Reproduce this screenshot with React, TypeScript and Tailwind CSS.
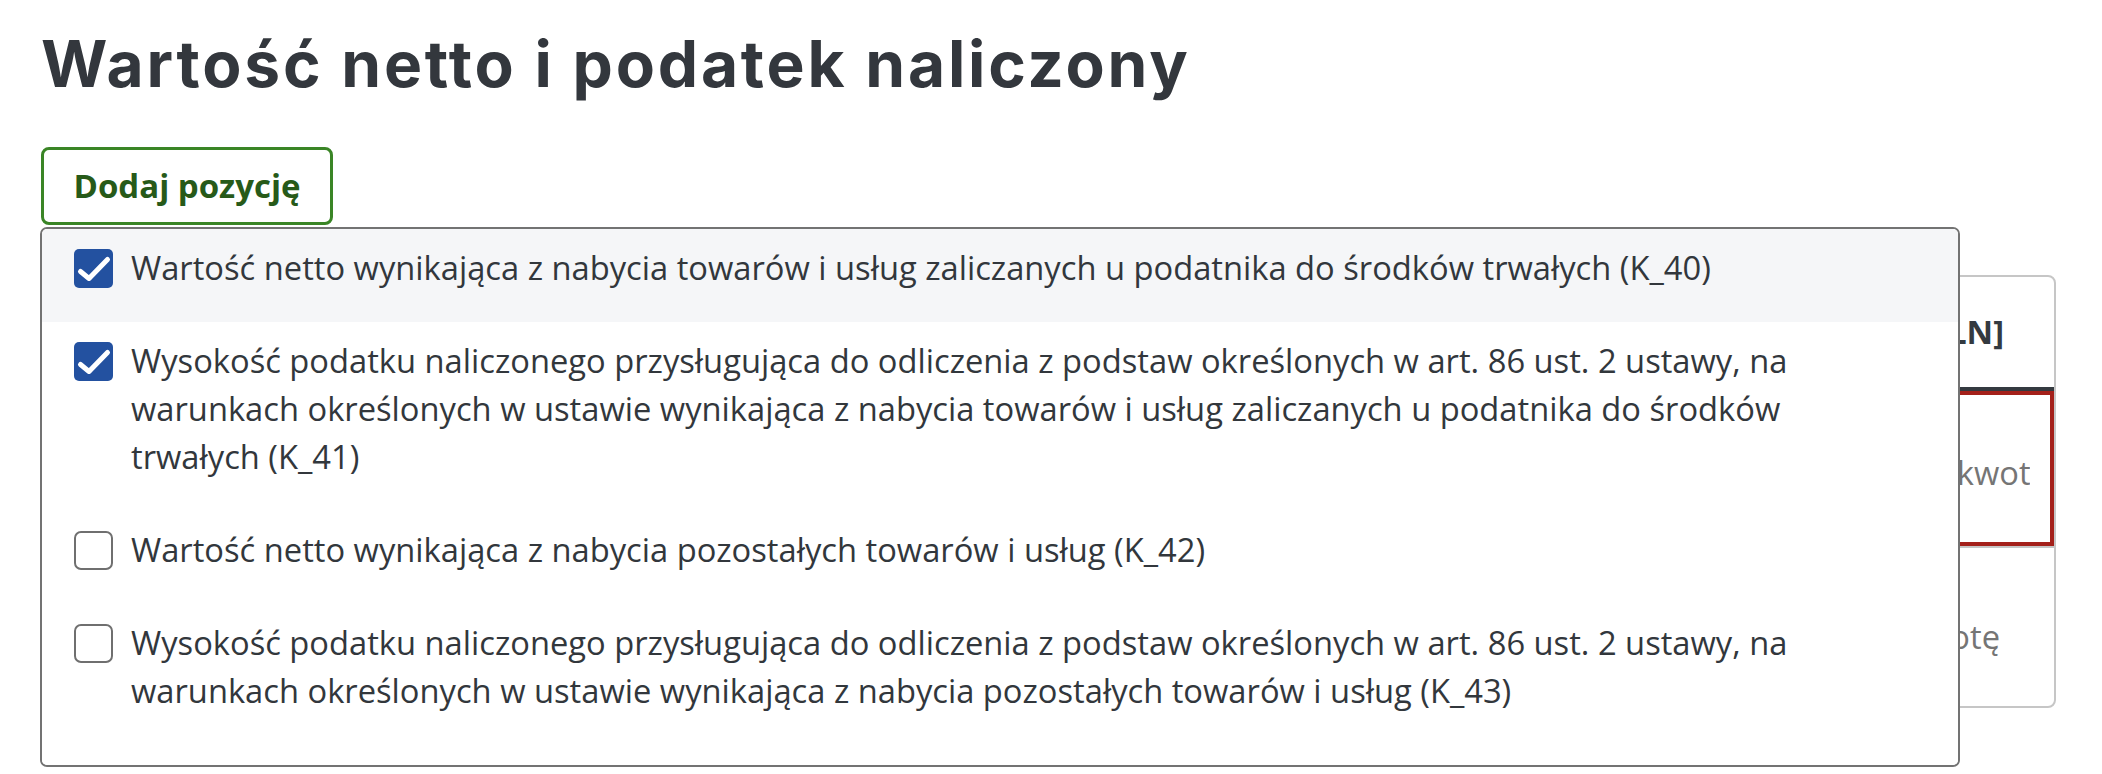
import React, { useState } from "react";

type Item = { id: string; label: string; checked: boolean };

const ITEMS: Item[] = [
  {
    id: "K_40",
    label:
      "Wartość netto wynikająca z nabycia towarów i usług zaliczanych u podatnika do środków trwałych (K_40)",
    checked: true,
  },
  {
    id: "K_41",
    label:
      "Wysokość podatku naliczonego przysługująca do odliczenia z podstaw określonych w art. 86 ust. 2 ustawy, na warunkach określonych w ustawie wynikająca z nabycia towarów i usług zaliczanych u podatnika do środków trwałych (K_41)",
    checked: true,
  },
  {
    id: "K_42",
    label: "Wartość netto wynikająca z nabycia pozostałych towarów i usług (K_42)",
    checked: false,
  },
  {
    id: "K_43",
    label:
      "Wysokość podatku naliczonego przysługująca do odliczenia z podstaw określonych w art. 86 ust. 2 ustawy, na warunkach określonych w ustawie wynikająca z nabycia pozostałych towarów i usług (K_43)",
    checked: false,
  },
  {
    id: "K_44",
    label: "Wartość netto wynikająca z korekty podatku naliczonego od nabycia środków trwałych (K_44)",
    checked: false,
  },
];

const Checkbox = ({ checked }: { checked: boolean }) =>
  checked ? (
    <span className="flex h-[39px] w-[39px] shrink-0 items-center justify-center rounded-[5px] bg-[#2351a0]">
      <svg width="39" height="39" viewBox="0 0 39 39" fill="none">
        <polyline
          points="6.5,22.5 15,29.5 33.5,10.5"
          stroke="white"
          strokeWidth="5"
          strokeLinecap="round"
          strokeLinejoin="round"
        />
      </svg>
    </span>
  ) : (
    <span className="h-[39px] w-[39px] shrink-0 rounded-[7px] border-2 border-[#6f6f6f] bg-white" />
  );

const Option = ({ item, active, onToggle }: { item: Item; active: boolean; onToggle: () => void }) => (
  <label
    onClick={onToggle}
    className={`flex cursor-pointer items-start gap-[18px] pl-[32px] pr-[98px] pt-[15px] pb-[30px] ${
      active ? "bg-[#f5f6f8]" : "bg-white"
    }`}
  >
    <span className="flex h-[48px] items-center">
      <Checkbox checked={item.checked} />
    </span>
    <span className="text-[32.7px] leading-[48px] text-[#32373c]">{item.label}</span>
  </label>
);

export default function App() {
  const [items, setItems] = useState<Item[]>(ITEMS);

  const toggle = (id: string) =>
    setItems((prev) => prev.map((it) => (it.id === id ? { ...it, checked: !it.checked } : it)));

  return (
    <div className="min-h-screen overflow-hidden bg-white font-['Open_Sans',sans-serif] text-[#32373c]">
      <div className="pl-[41px] pr-[46px] pt-[25px]">
        <h1 className="font-['Inter',sans-serif] text-[64px] font-bold leading-[78px] tracking-[2.8px] text-[#33373d]">
          Wartość netto i podatek naliczony
        </h1>

        <div className="relative mt-[44px]">
          <button className="flex h-[78px] w-[292px] items-center justify-center rounded-[8px] border-[3px] border-[#3a8526] bg-white text-[33px] font-bold text-[#275a19]">
            Dodaj pozycję
          </button>

          {/* lista pozycji do dodania */}
          <div className="absolute left-[-1px] top-[80px] z-10 h-[540px] w-[1920px] overflow-hidden rounded-[7px] border-2 border-[#737373] bg-white">
            {items.map((item, i) => (
              <Option key={item.id} item={item} active={i === 0} onToggle={() => toggle(item.id)} />
            ))}
          </div>

          <div className="mt-[50px] w-[2015px] overflow-hidden rounded-[8px] border-2 border-[#c6c6c6]">
            <div className="flex h-[114px] items-center justify-end border-b-4 border-[#343a40] pr-[50px] text-[32.7px] font-bold leading-[48px] text-[#343a40]">
              Wartość netto [PLN]
            </div>
            <div className="h-[157px] border-b-2 border-[#c6c6c6]">
              <div className="flex h-full items-center border-4 border-[#a4201a] pr-[20px] pt-[8px]">
                <div className="w-full overflow-hidden">
                  <div className="mr-[-19px] whitespace-nowrap text-right text-[32.7px] leading-[48px] text-[#757575]">
                    Wpisz kwotę
                  </div>
                </div>
              </div>
            </div>
            <div className="flex h-[158px] items-center justify-end pr-[54px] pt-[20px] text-[32.7px] leading-[48px] text-[#757575]">
              Wpisz kwotę
            </div>
          </div>

          <p className="mt-[55px] pl-[38px] text-[32.7px] leading-[48px] text-[#32373c]">
            Razem wszystko w sumie
          </p>
        </div>
      </div>
    </div>
  );
}
